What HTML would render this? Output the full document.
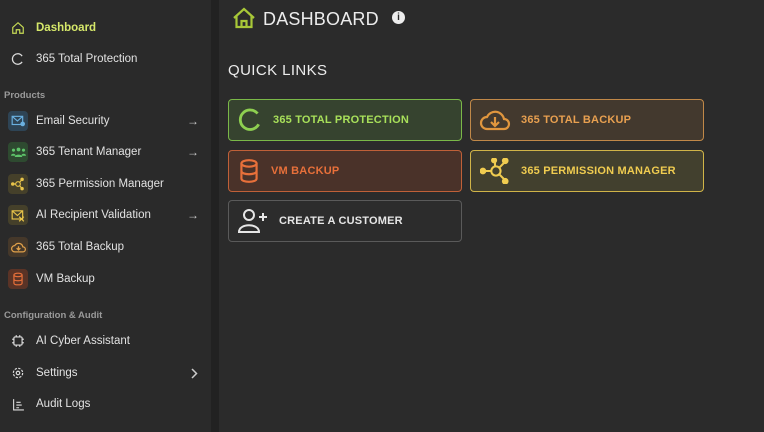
<!DOCTYPE html>
<html><head><meta charset="utf-8"><style>
*{margin:0;padding:0;box-sizing:border-box}
body{width:764px;height:432px;overflow:hidden;background:#2b2b2b;font-family:"Liberation Sans",sans-serif;position:relative;color:#e6e6e6}
.sb{position:absolute;left:0;top:0;width:211px;height:432px;background:#2a2a2a}
.strip{position:absolute;left:211px;top:0;width:8px;height:432px;background:#222}
.it{position:absolute;left:0;width:211px;height:26px;display:flex;align-items:center;font-size:11.5px;color:#e2e2e2}
.ic{position:absolute;left:8px;width:20px;height:20px;border-radius:4px;display:flex;align-items:center;justify-content:center}
.it span.t{position:absolute;left:36px}
.arr{position:absolute;left:187px;font-size:12px;color:#ccc}
.sec{position:absolute;left:4px;font-size:9.5px;font-weight:bold;color:#9a9a9a}
.card{position:absolute;width:234px;height:42px;border:1.5px solid;border-radius:4px;display:flex;align-items:center;font-weight:bold;font-size:11px;letter-spacing:.2px}
.card svg{position:absolute;left:8px}
.card span{position:absolute}
</style></head><body>
<div class="sb"></div><div class="strip"></div>

<div class="it" style="top:15px;color:#d6e86a;font-weight:bold"><div class="ic"><svg width="14" height="14" viewBox="0 0 24 24" fill="none" stroke="#c8dc55" stroke-width="2"><path d="M3 11L12 3l9 8v10H15v-6H9v6H3z"/></svg></div><span class="t">Dashboard</span></div>
<div class="it" style="top:46px"><div class="ic"><svg width="14" height="14" viewBox="0 0 24 24" fill="none" stroke="#ddd" stroke-width="2.2"><path d="M19 7A9 9 0 1 0 19 17"/></svg></div><span class="t">365 Total Protection</span></div>
<div class="sec" style="top:90px">Products</div>
<div class="it" style="top:108px"><div class="ic" style="background:#2e4455"><svg width="14" height="12" viewBox="0 0 24 20" fill="none" stroke="#6ab0e0" stroke-width="2"><rect x="2" y="2" width="18" height="14"/><path d="M2 2l9 8 9-8"/><circle cx="20" cy="15" r="3" fill="#6ab0e0"/></svg></div><span class="t">Email Security</span><span class="arr">→</span></div>
<div class="it" style="top:139px"><div class="ic" style="background:#2e4a30"><svg width="15" height="12" viewBox="0 0 24 18" fill="#5ec46a"><circle cx="12" cy="5" r="3"/><circle cx="4" cy="6" r="2.5"/><circle cx="20" cy="6" r="2.5"/><path d="M6 17c0-5 12-5 12 0zM0 15c0-4 7-4 7-1v1zM24 15c0-4-7-4-7-1v1z"/></svg></div><span class="t">365 Tenant Manager</span><span class="arr">→</span></div>
<div class="it" style="top:171px"><div class="ic" style="background:#45402a"><svg width="14" height="14" viewBox="0 0 24 24" fill="none" stroke="#e8c44a" stroke-width="2"><circle cx="12" cy="12" r="4"/><circle cx="3" cy="12" r="2" fill="#e8c44a"/><circle cx="19" cy="4" r="2" fill="#e8c44a"/><circle cx="19" cy="20" r="2" fill="#e8c44a"/><path d="M5 12h3M15 9l3-4M15 15l3 4"/></svg></div><span class="t">365 Permission Manager</span></div>
<div class="it" style="top:202px"><div class="ic" style="background:#45402a"><svg width="14" height="13" viewBox="0 0 24 20" fill="none" stroke="#e8c44a" stroke-width="2"><rect x="2" y="2" width="18" height="14"/><path d="M2 2l9 8 9-8M14 12l8 8M22 12l-8 8"/></svg></div><span class="t">AI Recipient Validation</span><span class="arr">→</span></div>
<div class="it" style="top:234px"><div class="ic" style="background:#45382a"><svg width="15" height="13" viewBox="0 0 24 20" fill="none" stroke="#e0a04a" stroke-width="2"><path d="M6 17a5 5 0 0 1 0-10 7 7 0 0 1 13 2 4 4 0 0 1 0 8z"/><path d="M12 8v6M9 11l3 3 3-3"/></svg></div><span class="t">365 Total Backup</span></div>
<div class="it" style="top:266px"><div class="ic" style="background:#5a3326"><svg width="12" height="14" viewBox="0 0 20 24" fill="none" stroke="#e8703a" stroke-width="2"><ellipse cx="10" cy="5" rx="7" ry="3"/><path d="M3 5v14c0 4 14 4 14 0V5M3 12c0 4 14 4 14 0"/></svg></div><span class="t">VM Backup</span></div>
<div class="sec" style="top:310px">Configuration &amp; Audit</div>
<div class="it" style="top:328px"><div class="ic"><svg width="14" height="14" viewBox="0 0 24 24" fill="none" stroke="#ddd" stroke-width="2"><rect x="5" y="5" width="14" height="14" rx="2"/><path d="M9 2v3M15 2v3M9 19v3M15 19v3M2 9h3M2 15h3M19 9h3M19 15h3"/></svg></div><span class="t">AI Cyber Assistant</span></div>
<div class="it" style="top:360px"><div class="ic"><svg width="14" height="14" viewBox="0 0 24 24" fill="none" stroke="#ddd" stroke-width="2"><circle cx="12" cy="12" r="3"/><circle cx="12" cy="12" r="8" stroke-dasharray="4 2.3"/></svg></div><span class="t">Settings</span><svg style="position:absolute;left:191px" width="7" height="11" viewBox="0 0 7 11" fill="none" stroke="#ccc" stroke-width="1.5"><path d="M1 1l4.5 4.5L1 10"/></svg></div>
<div class="it" style="top:391px"><div class="ic"><svg width="13" height="13" viewBox="0 0 24 24" fill="none" stroke="#ddd" stroke-width="2"><path d="M3 2v20h19M8 8h8M8 13h10M8 18h5"/></svg></div><span class="t">Audit Logs</span></div>

<svg style="position:absolute;left:232px;top:7px" width="24" height="22" viewBox="0 0 24 22" fill="none" stroke="#a8c838" stroke-width="2.2"><path d="M2 11L12 2l10 9M4.5 9v11h15V9M9.5 20v-6h5v6"/></svg>
<div style="position:absolute;left:263px;top:9px;font-size:18px;color:#ececec;letter-spacing:.2px">DASHBOARD</div>
<div style="position:absolute;left:392px;top:11px;width:13px;height:13px;border-radius:50%;background:#eee;color:#2b2b2b;font-size:10px;font-weight:bold;text-align:center;line-height:13px">i</div>
<div style="position:absolute;left:228px;top:62px;font-size:15px;color:#ececec;letter-spacing:.4px">QUICK LINKS</div>

<div class="card" style="left:228px;top:99px;background:#36432f;border-color:#7ab848;color:#a8e05a"><svg width="26" height="26" viewBox="0 0 24 24" fill="none" stroke="#8ed050" stroke-width="2.6"><path d="M19 6A9 9 0 1 0 20 16"/></svg><span style="left:44px">365 TOTAL PROTECTION</span></div>
<div class="card" style="left:470px;top:99px;background:#43392e;border-color:#c08848;color:#e8a050"><svg width="32" height="26" viewBox="0 0 32 26" fill="none" stroke="#e0963e" stroke-width="2.2"><path d="M8 22a6 6 0 0 1 0-12 9 9 0 0 1 17 2 5 5 0 0 1 0 10z"/><path d="M16 10v9M12 15l4 4 4-4"/></svg><span style="left:50px">365 TOTAL BACKUP</span></div>
<div class="card" style="left:228px;top:150px;background:#4a3229;border-color:#c06038;color:#e8703a"><svg width="24" height="26" viewBox="0 0 20 24" fill="none" stroke="#e8703a" stroke-width="2"><ellipse cx="10" cy="5" rx="7" ry="3"/><path d="M3 5v14c0 4 14 4 14 0V5M3 12c0 4 14 4 14 0"/></svg><span style="left:42px">VM BACKUP</span></div>
<div class="card" style="left:470px;top:150px;background:#42402e;border-color:#d0b448;color:#f0cc50"><svg style="left:9px" width="30" height="26" viewBox="0 0 32 28" fill="none" stroke="#f0cc50" stroke-width="2.2"><circle cx="17" cy="14" r="5"/><circle cx="3" cy="14" r="2.5" fill="#f0cc50"/><circle cx="27" cy="3" r="2.5" fill="#f0cc50"/><circle cx="27" cy="25" r="2.5" fill="#f0cc50"/><circle cx="15" cy="2.5" r="2.2" fill="#f0cc50"/><path d="M5 14h7M21 10l5-5M21 18l5 5M16 9V4"/></svg><span style="left:50px">365 PERMISSION MANAGER</span></div>
<div class="card" style="left:228px;top:200px;background:#2c2c2c;border-color:#5a5a5a;color:#e6e6e6"><svg width="32" height="26" viewBox="0 0 32 26" fill="none" stroke="#e6e6e6" stroke-width="2"><circle cx="12" cy="7" r="5"/><path d="M2 24c0-9 20-9 20 0zM26 5v8M22 9h8"/></svg><span style="left:50px">CREATE A CUSTOMER</span></div>
</body></html>
